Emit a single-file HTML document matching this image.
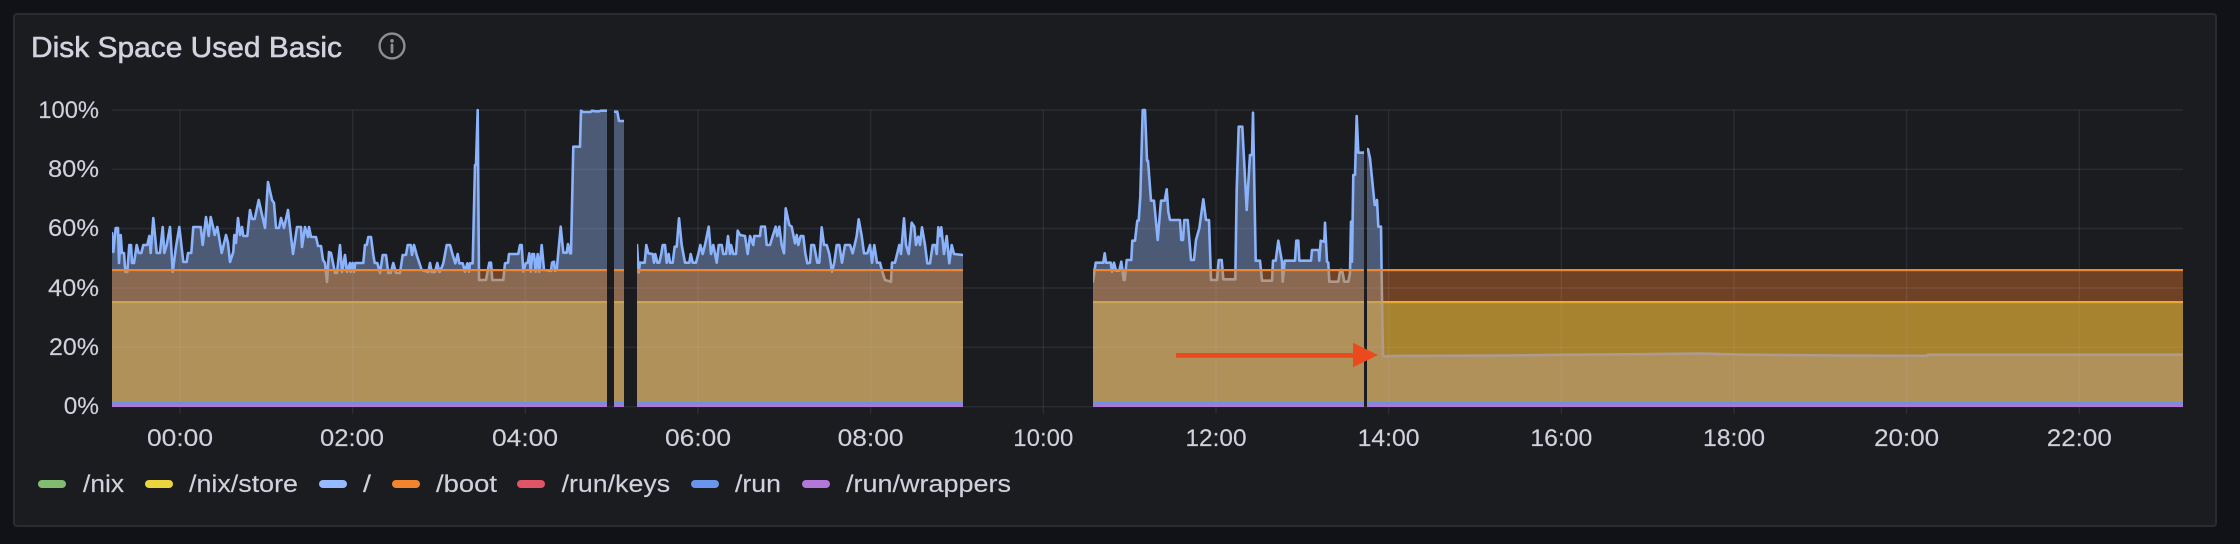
<!DOCTYPE html>
<html lang="en">
<head>
<meta charset="utf-8">
<title>Disk Space Used Basic</title>
<style>
html,body{margin:0;padding:0;background:#111217;width:2240px;height:544px;overflow:hidden}
svg{display:block}
text{font-family:"Liberation Sans",sans-serif;fill:#d0d1dc;font-size:24.5px;stroke:#d0d1dc;stroke-width:.15px}
</style>
</head>
<body>
<svg width="2240" height="544" viewBox="0 0 2240 544" xmlns="http://www.w3.org/2000/svg">
<defs>
<path id="L" d="M108,500 L108,233 L112,233 L113.3,252 L115.7,228 L118,228 L119,263 L120.7,235 L122,253 L124,253 L125.3,272 L127.3,272 L129.3,245 L131,245 L132,263 L134,263 L136.7,245 L138.7,253 L141.3,253 L143.3,245 L147.3,245 L149.3,236 L150.7,253 L153.3,218 L156.7,253 L160,253 L162.7,227 L164.3,253 L166.7,245 L170,227 L172.7,272 L176,247 L179.3,227 L183.3,262 L186.7,262 L188,253 L191.3,253 L193.3,227 L200.7,227 L202.7,245 L206,217 L208.7,236 L210.7,217 L213.3,228 L214.7,235 L217.3,227 L221.7,253 L226,235 L228,243 L230,262 L233.3,252 L234.3,235 L236,243 L238,218 L240,235 L242,227 L243.3,236 L247.3,236 L250,210 L252,219 L254.7,219 L258.7,200 L265,228 L268,182 L272,200 L274,203 L276,228 L279,228 L281,218 L284,228 L288,210 L293,254 L297,227 L301,227 L302,247 L305,227 L308,237 L309,227 L311,237 L316,237 L318,246 L321,246 L323,260 L325,263 L327,282 L329,252 L331,253 L333,263 L335,273 L337,273 L340,245 L342,272 L345,255 L347,272 L350,263 L350.7,272 L352.7,263 L354,272 L355.3,263 L360,263 L363.3,263 L365,245 L366.7,245 L368.3,237 L371,237 L373.3,255 L374.7,263 L377.3,263 L380,273 L382.7,255 L386,255 L388.3,273 L390.7,273 L393.3,263 L396,273 L400,273 L402.7,255 L406,255 L407.7,245 L410.7,245 L412,255 L414,245 L416.7,255 L421.7,270 L428.3,272 L430,263 L431.7,272 L435,272 L437.3,263 L439.3,272 L440,271.7 L443.3,263.3 L446.7,245 L450,245 L452.7,255 L455.3,263.3 L457.7,254 L459.3,263.3 L462.7,263.3 L465,271.7 L467.3,263.3 L469,271.7 L470,263.3 L472.7,263.3 L475,165 L476,165 L477.7,110 L479,280 L486,280 L489.3,262.7 L491,262.7 L492.3,280 L503.3,280 L505,263.3 L508,262.7 L509,254 L518.3,254 L520,245 L521.7,245 L523.3,271.7 L525.7,263.3 L527.7,262.7 L529.3,253.3 L530.7,271.7 L532.3,254 L534,254 L535.7,271.7 L537.7,254 L539.3,271.7 L541.7,245 L544,270 L551,271 L552,262.7 L554,261.7 L555,271 L556.7,270 L560.7,226.7 L563.3,252.7 L566.7,252.7 L568,244 L570,253.3 L571,253.3 L573.3,146.7 L580,146.7 L581,110.7 L583.3,112 L590.7,112 L592,110.7 L595,111.3 L599.3,111.3 L600.7,110.7 L606.7,110.7 L611,110.7 L611,500 Z
M610,500 L610,111.7 L614,111.7 L617.3,111.7 L619,121 L624,121 L628,121 L628,500 Z
M633,500 L633,245 L637,245 L638.7,272.7 L640,262.7 L644.7,262.7 L646.3,245 L648.3,253.3 L652.7,254 L654,262.7 L655.3,254 L657.3,262.7 L659.3,262.7 L661.3,254 L662.7,245 L665,245 L666.7,262.7 L668.7,254 L670,262.7 L672.7,262.7 L674.7,246.7 L676.7,246.7 L679,218.3 L681.7,245 L685,262.7 L689.3,262.7 L690.7,254 L692.7,262.7 L696,262.7 L698.3,254 L700.3,245 L702.7,254 L705,245 L708.7,226.7 L711,254 L713.3,245 L716.7,262.7 L718.7,245 L721.7,245 L723.3,254 L726,254 L728,236 L730,254 L731,245 L733.3,254 L736,254 L737.7,230.7 L740,235 L745,236 L747.7,254 L750,236 L753.3,245 L754.3,236 L760,236 L761,226.7 L765,226.7 L766.7,245 L770,245 L772.7,236 L775.7,226.7 L777.3,236 L779.3,226.7 L781.7,245 L784,253.3 L785.7,208.3 L789.3,225 L791.7,226.7 L795,243.3 L796.7,235 L798.3,245 L800.7,236 L803.3,236 L805.3,253.3 L807.3,263.3 L810,262.7 L811.3,245 L814,245 L817.3,262.7 L819.3,262.7 L821.7,227.3 L824,245 L826.7,245 L829.3,254 L832,271.7 L834.3,262.7 L836.7,245 L839.3,245 L842,262.7 L845,245 L850,245 L852.7,253.3 L856.7,236 L858.7,219.3 L861.7,236 L864,253.3 L867.3,253.3 L870,245 L872,262.7 L874.3,245 L877,262.7 L880,262.7 L882,270.7 L885,280 L891,281.7 L892,262.7 L895,262.7 L899.3,245 L901,254 L904,218.3 L906,245 L908.7,254 L911.7,222.7 L914.3,226.7 L916,245 L918.3,236.7 L920,245 L922,227.3 L925,245 L927.3,263.3 L930,263.3 L932.7,245 L935.3,245 L936.7,254 L938.3,227.3 L940,236 L941.3,227.3 L944,254 L946.7,236 L949.3,263.3 L951.7,245 L954,254 L963,255 L967,255 L967,500 Z
M1089,500 L1089,281.7 L1093,281.7 L1095.7,262.7 L1103.3,262.7 L1104.7,253.3 L1106,262.7 L1110.7,262.7 L1112,271.7 L1114,262.7 L1116,270.7 L1119.3,270.7 L1121.3,261.7 L1123.7,280 L1124.7,280 L1126.7,260 L1131.3,260 L1132.3,240.7 L1135,240.7 L1137.3,220.7 L1138.7,220.7 L1140.3,196.7 L1142.7,110 L1145,110 L1147,160.7 L1148,160.7 L1151,200.7 L1154,200.7 L1157.7,240 L1161,200.7 L1164.7,200.7 L1166.7,189.3 L1168.3,211.7 L1170,220 L1180,220 L1181.3,240 L1183,240 L1184.3,220 L1187.7,220 L1191,260 L1194,260 L1196,240 L1199.3,228.3 L1203.3,199.3 L1206,220 L1209,220 L1211,280 L1217,280 L1218.7,260 L1221.7,260 L1223.3,279.3 L1235.3,279.3 L1236.7,190 L1238.7,126.7 L1242.3,126.7 L1246.7,210 L1250,155 L1252,155 L1253,112.7 L1255.7,260.7 L1260,260.7 L1262,280.7 L1272,280.7 L1273,260.7 L1275.7,260.7 L1278.3,240.7 L1282,261.7 L1282.7,281.7 L1284.7,260.7 L1295,260.7 L1296.3,240.7 L1298.3,240.7 L1299.3,260.7 L1311,260.7 L1312,250 L1318.7,250 L1319.3,260.7 L1320.7,240.7 L1324.3,241.7 L1325,222.7 L1327,261.7 L1328.3,262.7 L1329.3,281.7 L1338.3,281.7 L1340.3,270 L1342,270 L1344.3,281.7 L1348.3,281.7 L1350,273.3 L1351,221.7 L1352,261.7 L1353.3,175 L1355,175 L1356.7,116 L1358.3,152.7 L1364,152.7 L1367,149 L1368,149.3 L1370,158.3 L1374.7,205 L1376,205 L1377,200 L1378.3,226.7 L1381,226.7 L1382,300 L1383,356 L1387,356.5 L1388,356 L1500,355.6 L1560,354.8 L1640,354.2 L1700,353.6 L1740,354.6 L1840,355.6 L1928,355.8 L1928,354.7 L2183,354.7 L2187,354.7 L2187,500 Z"/>
<clipPath id="seg">
<rect x="112" y="108" width="495" height="299"/>
<rect x="614" y="108" width="10" height="299"/>
<rect x="637" y="108" width="326" height="299"/>
<rect x="1093" y="108" width="271" height="299"/>
<rect x="1367" y="108" width="816" height="299"/>
</clipPath>
<clipPath id="under"><use href="#L"/></clipPath>
<clipPath id="above270"><rect x="100" y="100" width="2100" height="170"/></clipPath>
<clipPath id="below270"><rect x="100" y="270" width="2100" height="140"/></clipPath>
</defs>

<rect x="14" y="14" width="2202" height="512" rx="3" fill="#1a1c20" stroke="#2a2c30" stroke-width="2"/>

<text x="31" y="57" textLength="311" lengthAdjust="spacingAndGlyphs" style="font-size:29px;fill:#d2d3de;stroke:#d2d3de;stroke-width:.55px">Disk Space Used Basic</text>
<g fill="none" stroke="#8d8e92">
<circle cx="392" cy="46" r="12.4" stroke-width="2.4"/>
<path d="M392,45 V52" stroke-width="2.8" stroke-linecap="round"/>
</g>
<circle cx="392" cy="40.8" r="1.8" fill="#8d8e92"/>

<g clip-path="url(#seg)">
<rect x="100" y="270" width="2100" height="32" fill="#6f4226"/>
<rect x="100" y="302" width="2100" height="105" fill="#a7822f"/>
<g clip-path="url(#under)">
<rect x="100" y="100" width="2100" height="170" fill="#4c5a76"/>
<rect x="100" y="270" width="2100" height="32" fill="#8b6850"/>
<rect x="100" y="302" width="2100" height="105" fill="#b09159"/>
</g>
</g>

<g stroke="#cccedc" stroke-opacity=".09" stroke-width="1.4" fill="none">
<path d="M112,110H2183M112,169.3H2183M112,228.5H2183M112,288H2183M112,347.3H2183M112,406.7H2183"/>
<path d="M180,110V414M352.7,110V414M525.3,110V414M698,110V414M870.6,110V414M1043.3,110V414M1216,110V414M1388.6,110V414M1561.3,110V414M1734,110V414M1906.6,110V414M2079.3,110V414"/>
</g>

<g clip-path="url(#seg)">
<g clip-path="url(#above270)"><use href="#L" fill="none" stroke="#8ab3fb" stroke-width="2.6" stroke-linejoin="round"/></g>
<g clip-path="url(#below270)"><use href="#L" fill="none" stroke="#ae9b90" stroke-width="2.6" stroke-linejoin="round"/></g>
<rect x="100" y="269" width="2100" height="2.2" fill="#ee8530"/>
<rect x="100" y="301" width="1283" height="2.2" fill="#c9a452"/>
<rect x="1383" y="301" width="817" height="2.2" fill="#eba832"/>
<rect x="100" y="402" width="2100" height="2.4" fill="#6a93e6"/>
<rect x="100" y="404.4" width="2100" height="2.6" fill="#b076d6"/>
</g>

<path d="M1176,353H1353V342.7L1378,355L1353,367.3V357.8H1176Z" fill="#ea4a1e"/>

<g text-anchor="end">
<text x="99" y="118" textLength="60.7" lengthAdjust="spacingAndGlyphs">100%</text>
<text x="99" y="177" textLength="51" lengthAdjust="spacingAndGlyphs">80%</text>
<text x="99" y="236" textLength="51" lengthAdjust="spacingAndGlyphs">60%</text>
<text x="99" y="296" textLength="51" lengthAdjust="spacingAndGlyphs">40%</text>
<text x="99" y="355" textLength="50" lengthAdjust="spacingAndGlyphs">20%</text>
<text x="99" y="414" textLength="35.3" lengthAdjust="spacingAndGlyphs">0%</text>
</g>

<g text-anchor="middle">
<text x="180" y="446" textLength="66" lengthAdjust="spacingAndGlyphs">00:00</text>
<text x="352" y="446" textLength="64" lengthAdjust="spacingAndGlyphs">02:00</text>
<text x="525" y="446" textLength="66" lengthAdjust="spacingAndGlyphs">04:00</text>
<text x="698" y="446" textLength="66" lengthAdjust="spacingAndGlyphs">06:00</text>
<text x="870.6" y="446" textLength="66" lengthAdjust="spacingAndGlyphs">08:00</text>
<text x="1043.3" y="446" textLength="60" lengthAdjust="spacingAndGlyphs">10:00</text>
<text x="1216" y="446" textLength="61" lengthAdjust="spacingAndGlyphs">12:00</text>
<text x="1388.6" y="446" textLength="62" lengthAdjust="spacingAndGlyphs">14:00</text>
<text x="1561.3" y="446" textLength="62" lengthAdjust="spacingAndGlyphs">16:00</text>
<text x="1734" y="446" textLength="62" lengthAdjust="spacingAndGlyphs">18:00</text>
<text x="1906.6" y="446" textLength="65" lengthAdjust="spacingAndGlyphs">20:00</text>
<text x="2079.3" y="446" textLength="65" lengthAdjust="spacingAndGlyphs">22:00</text>
</g>

<rect x="38" y="480" width="28" height="8" rx="4" fill="#81bd70"/>
<text x="83" y="492" textLength="41" lengthAdjust="spacingAndGlyphs">/nix</text>
<rect x="145" y="480" width="28" height="8" rx="4" fill="#ecd43c"/>
<text x="189" y="492" textLength="109" lengthAdjust="spacingAndGlyphs">/nix/store</text>
<rect x="319" y="480" width="28" height="8" rx="4" fill="#96baff"/>
<text x="363" y="492" textLength="8" lengthAdjust="spacingAndGlyphs">/</text>
<rect x="392" y="480" width="28" height="8" rx="4" fill="#f2842e"/>
<text x="436" y="492" textLength="61" lengthAdjust="spacingAndGlyphs">/boot</text>
<rect x="517" y="480" width="28" height="8" rx="4" fill="#e05565"/>
<text x="561.6" y="492" textLength="108.5" lengthAdjust="spacingAndGlyphs">/run/keys</text>
<rect x="691" y="480" width="28" height="8" rx="4" fill="#6a95ec"/>
<text x="735" y="492" textLength="46" lengthAdjust="spacingAndGlyphs">/run</text>
<rect x="802" y="480" width="28" height="8" rx="4" fill="#b277d8"/>
<text x="846" y="492" textLength="165" lengthAdjust="spacingAndGlyphs">/run/wrappers</text>
</svg>
</body>
</html>
